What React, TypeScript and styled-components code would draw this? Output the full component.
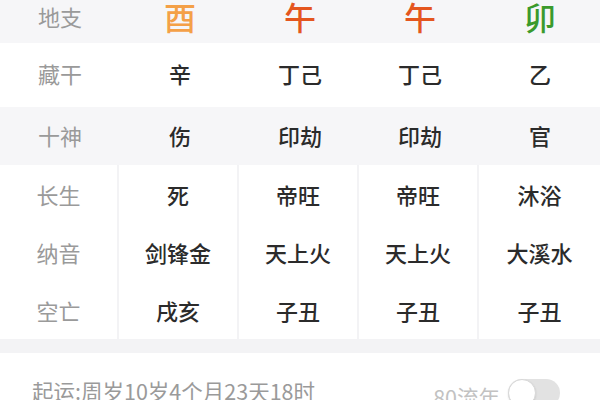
import React from "react";
import styled, { createGlobalStyle } from "styled-components";

const Global = createGlobalStyle`
  html, body { margin: 0; padding: 0; background: #ffffff; }
  body { font-family: "Noto Sans CJK SC", "Noto Sans", sans-serif; overflow: hidden; }
`;

const Page = styled.div`
  width: 600px;
  height: 400px;
  overflow: hidden;
  background: #ffffff;
`;

const Band = styled.div<{ $h: number; $gray?: boolean }>`
  display: grid;
  grid-template-columns: repeat(5, 120px);
  grid-template-rows: ${(p) => p.$h}px;
  height: ${(p) => p.$h}px;
  overflow: hidden;
  background: ${(p) => (p.$gray ? "#f6f6f8" : "#ffffff")};
`;

const Cell = styled.div<{ $shift?: number }>`
  display: flex;
  align-items: center;
  justify-content: center;
  line-height: 1.2;
  min-height: 0;
  padding-bottom: ${(p) => p.$shift ?? 0}px;
`;

const Label = styled(Cell)`
  color: #9a9a9a;
  font-size: 22px;
  font-weight: 400;
`;

const Value = styled(Cell)`
  color: #2b2b2b;
  font-size: 22px;
  font-weight: 500;
`;

const Big = styled(Cell)<{ $color: string }>`
  color: ${(p) => p.$color};
  font-size: 32px;
  font-weight: 500;
`;

const Boxed = styled.div`
  display: grid;
  grid-template-columns: 117px 118px 118px 118px 1fr;
  grid-auto-rows: 58px;
  column-gap: 2px;
  background: #f3f3f5;
  padding-bottom: 14px;
  height: 174px;
`;

const BoxLabel = styled(Label)`
  background: #ffffff;
`;

const BoxValue = styled(Value)`
  background: #ffffff;
`;

const Footer = styled.div`
  display: flex;
  align-items: flex-start;
  justify-content: space-between;
  padding: 22px 40px 0 32px;
`;

const Start = styled.span`
  color: #9a9a9a;
  font-size: 21.5px;
  line-height: 31px;
  white-space: nowrap;
`;

const ToggleWrap = styled.div`
  display: flex;
  align-items: flex-start;
  gap: 8px;
`;

const ToggleText = styled.span`
  color: #c2c2c2;
  font-size: 21.5px;
  line-height: 31px;
  margin-top: 6px;
  white-space: nowrap;
`;

const Track = styled.div`
  position: relative;
  width: 52px;
  height: 28px;
  border-radius: 14px;
  background: #e2e2e2;
  margin-top: 4px;
`;

const Knob = styled.div`
  position: absolute;
  left: 0;
  top: 0;
  width: 26px;
  height: 26px;
  border-radius: 50%;
  background: #ffffff;
  border: 1px solid #d8d8d8;
  box-shadow: 0 1px 2px rgba(0, 0, 0, 0.12);
`;

const branches = [
  { t: "酉", c: "#f4a047" },
  { t: "午", c: "#e4561f" },
  { t: "午", c: "#e4561f" },
  { t: "卯", c: "#3b9a2c" },
];

const lower = [
  { label: "长生", vals: ["死", "帝旺", "帝旺", "沐浴"] },
  { label: "纳音", vals: ["剑锋金", "天上火", "天上火", "大溪水"] },
  { label: "空亡", vals: ["戌亥", "子丑", "子丑", "子丑"] },
];

export default function App() {
  return (
    <Page>
      <Global />
      <Band $h={43} $gray>
        <Label $shift={11}>地支</Label>
        {branches.map((b, i) => (
          <Big key={i} $color={b.c} $shift={11}>
            {b.t}
          </Big>
        ))}
      </Band>
      <Band $h={64}>
        <Label $shift={4}>藏干</Label>
        {["辛", "丁己", "丁己", "乙"].map((v, i) => (
          <Value key={i} $shift={4}>{v}</Value>
        ))}
      </Band>
      <Band $h={58} $gray>
        <Label $shift={2}>十神</Label>
        {["伤", "印劫", "印劫", "官"].map((v, i) => (
          <Value key={i} $shift={2}>{v}</Value>
        ))}
      </Band>
      <Boxed>
        {lower.map((r) => (
          <React.Fragment key={r.label}>
            <BoxLabel>{r.label}</BoxLabel>
            {r.vals.map((v, i) => (
              <BoxValue key={i}>{v}</BoxValue>
            ))}
          </React.Fragment>
        ))}
      </Boxed>
      <Footer>
        <Start>起运:周岁10岁4个月23天18时</Start>
        <ToggleWrap>
          <ToggleText>80流年</ToggleText>
          <Track>
            <Knob />
          </Track>
        </ToggleWrap>
      </Footer>
    </Page>
  );
}
